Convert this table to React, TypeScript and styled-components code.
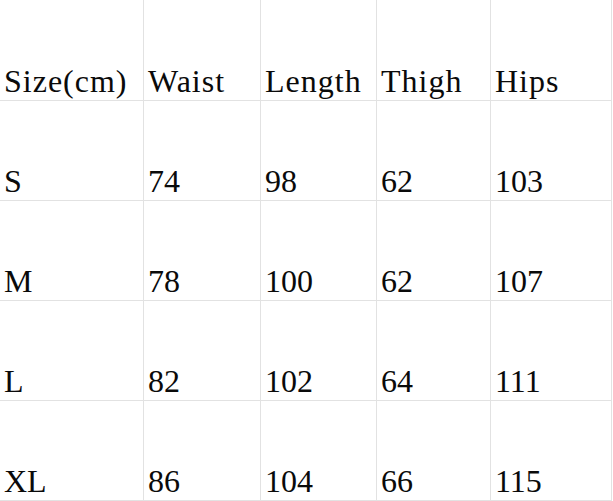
import React from "react";
import styled, { createGlobalStyle } from "styled-components";

const GlobalStyle = createGlobalStyle`
  html, body {
    margin: 0;
    padding: 0;
    background: #ffffff;
  }
  body {
    font-family: "Liberation Serif", "Times New Roman", serif;
    color: #000000;
  }
`;

const Grid = styled.div`
  display: grid;
  grid-template-columns: 144px 117px 116px 114px 121px;
  grid-template-rows: 101px repeat(4, 100px);
  width: 612px;
`;

const Cell = styled.div<{ $head?: boolean }>`
  box-sizing: border-box;
  border-right: 1px solid #e2e2e2;
  border-bottom: 1px solid #e2e2e2;
  display: flex;
  align-items: flex-end;
  padding: 0 0 3px 4px;
  font-family: "Liberation Serif", "Times New Roman", serif;
  font-size: 32px;
  line-height: 1;
  letter-spacing: ${(p) => (p.$head ? "1px" : "0")};
  color: #0a0a0a;
  white-space: nowrap;
  overflow: hidden;
`;

const header = ["Size(cm)", "Waist", "Length", "Thigh", "Hips"];
const rows: string[][] = [
  ["S", "74", "98", "62", "103"],
  ["M", "78", "100", "62", "107"],
  ["L", "82", "102", "64", "111"],
  ["XL", "86", "104", "66", "115"],
];

export default function App() {
  return (
    <>
      <GlobalStyle />
      <Grid>
        {header.map((h) => (
          <Cell key={h} $head>
            {h}
          </Cell>
        ))}
        {rows.map((r) =>
          r.map((v, i) => <Cell key={r[0] + i}>{v}</Cell>)
        )}
      </Grid>
    </>
  );
}
